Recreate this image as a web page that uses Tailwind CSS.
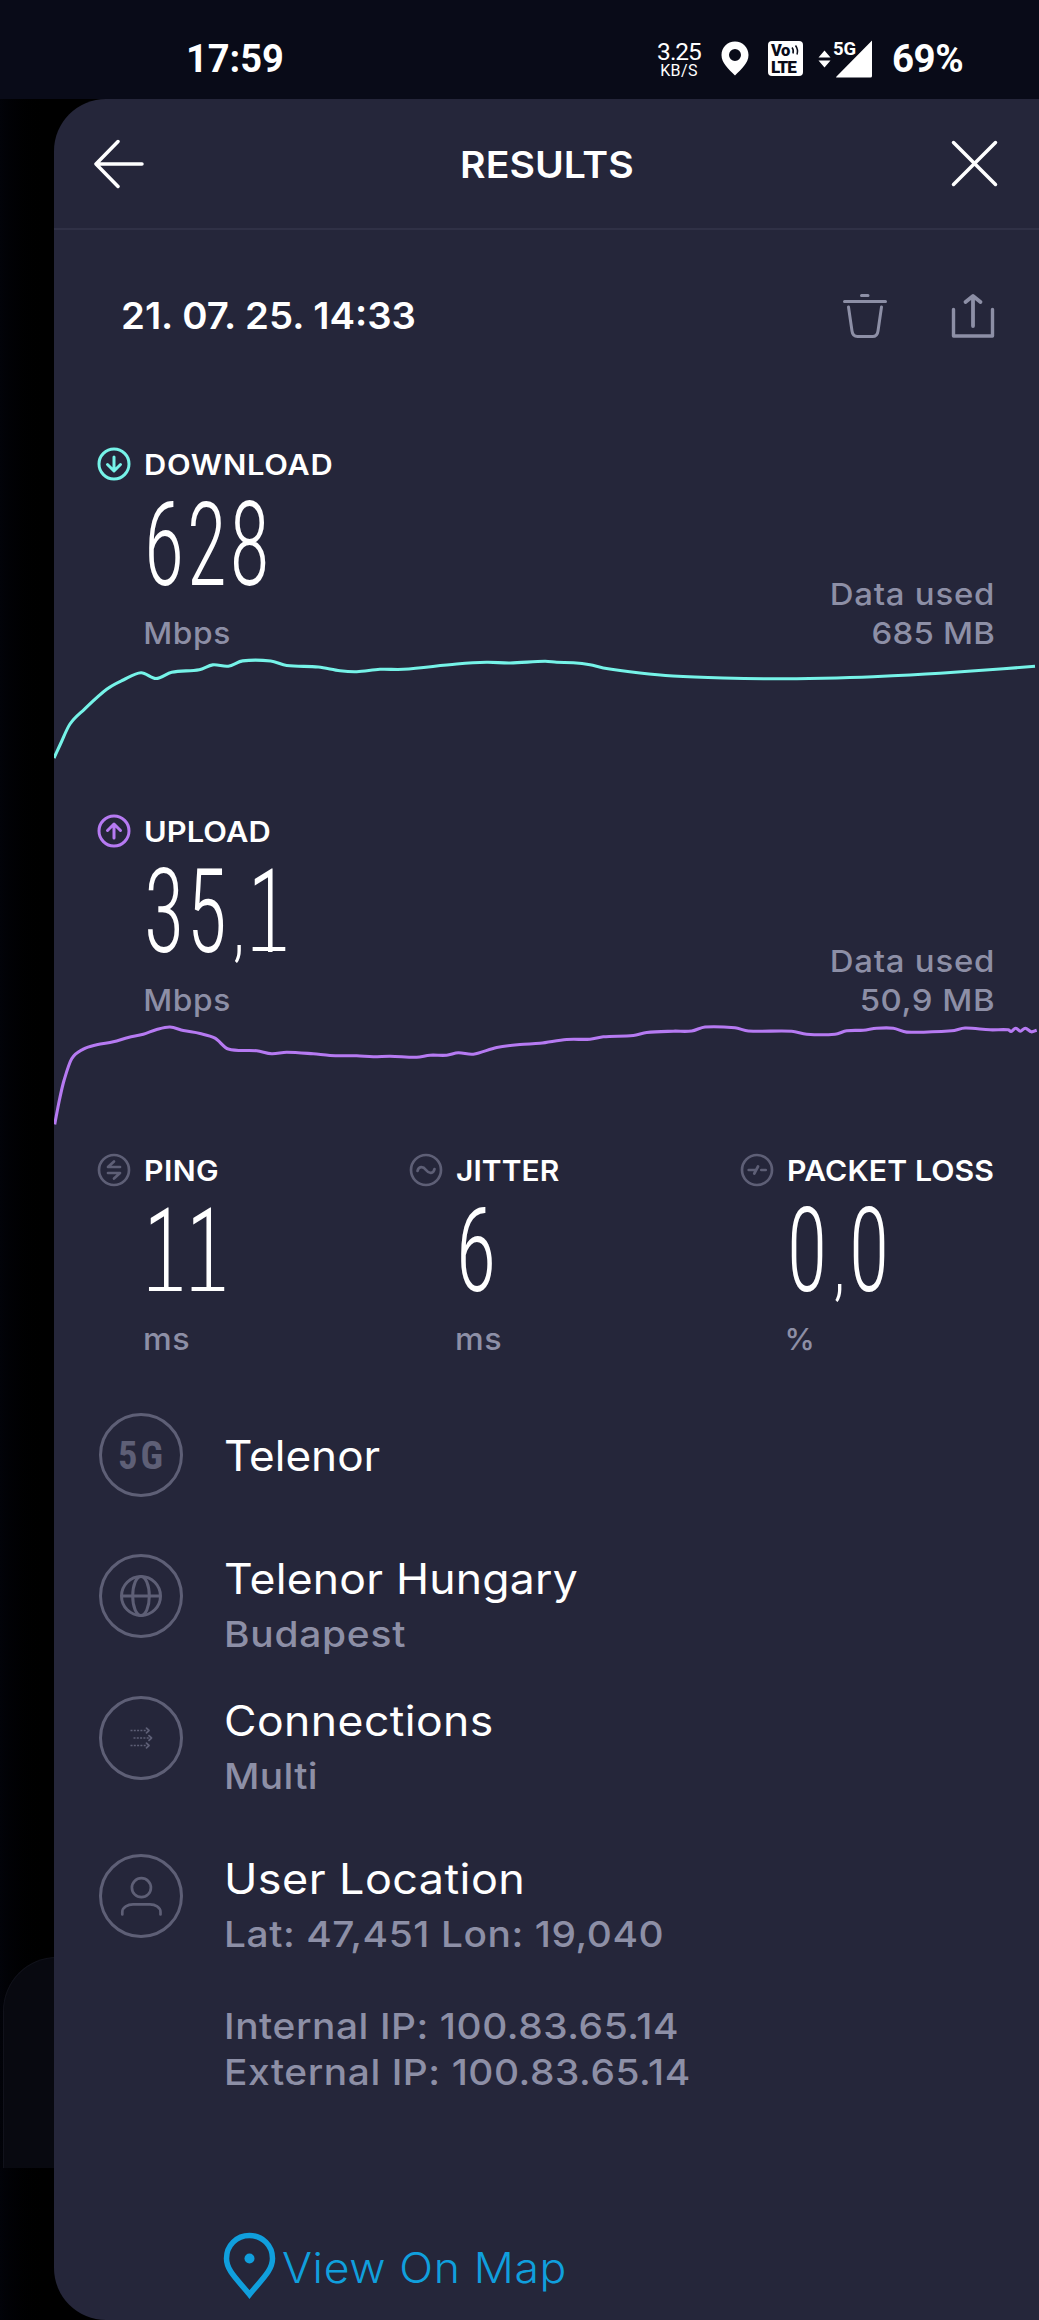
<!DOCTYPE html>
<html lang="en">
<head>
<meta charset="utf-8">
<title>Results</title>
<script src="https://cdn.jsdelivr.net/npm/@tailwindcss/browser@4"></script>
</head>
<body class="bg-[#020308]">
<div class="flex h-[2320px] w-[1039px] flex-col overflow-hidden font-['Inter',sans-serif] text-white">

  <!-- Status bar -->
  <div class="flex h-[99px] shrink-0 items-center bg-[#090b18] pt-[18px] pl-[186px] font-['Roboto',sans-serif]">
    <span class="w-[471px] text-[38px] leading-[40px] font-bold">17:59</span>
    <div class="flex w-[44px] flex-col items-center pt-[3px]">
      <span class="text-[24.5px] leading-[20px] tracking-[-1px]">3.25</span>
      <span class="mt-px text-[16px] leading-[16px] tracking-[0.4px]">KB/S</span>
    </div>
    <svg class="ml-[20px] h-[35px] w-[28px]" viewBox="0 0 28 35"><path fill="#fff" fill-rule="evenodd" d="M14 0.5C6.300 0.500 0.500 6.500 0.500 14C0.500 22 7.500 28 14 34.500C20.500 28 27.500 22 27.500 14C27.500 6.500 21.700 0.500 14 0.500ZM14 8A6 6 0 1 1 14 20A6 6 0 1 1 14 8Z"/></svg>
    <div class="relative ml-[19px] h-[35px] w-[35px] rounded-[4px] bg-white text-[#090b18]">
      <span class="absolute top-[2px] left-[3px] text-[16.5px] leading-[16px] font-black tracking-[-0.5px]">Vo</span>
      <span class="absolute top-[18px] left-[3px] text-[17px] leading-[16px] font-black tracking-[-1px]">LTE</span>
      <svg class="absolute top-[4px] left-[23px] h-[10px] w-[9px]" viewBox="0 0 9 10" fill="none" stroke="#090b18" stroke-width="1.500"><path d="M1 2.500Q3 5 2 8.500M4.500 0.500Q7.500 4.500 6 9.500"/></svg>
    </div>
    <svg class="ml-[15px] h-[18px] w-[13px]" viewBox="0 0 13 18"><path fill="#fff" d="M6.500 0.500L12.500 7.500H0.500ZM6.500 17.500L12.500 10.500H0.500Z"/></svg>
    <div class="relative ml-[2px] h-[38px] w-[39px]">
      <svg class="h-[38px] w-[39px]" viewBox="0 0 39 38"><path fill="#fff" d="M39 0.500V36Q39 37.500 37.500 37.500H3.500Q2.500 37.500 3.500 36.500Z"/></svg>
      <span class="absolute top-[-1px] left-0 text-[18.5px] leading-[20px] font-bold">5G</span>
    </div>
    <span class="ml-[20px] text-[38.5px] leading-[40px] font-bold tracking-[-0.5px]">69%</span>
  </div>

  <div class="flex flex-1">
    <!-- Dimmed screen behind the panel -->
    <div class="relative w-[54px] shrink-0 bg-linear-to-r from-[#020309] to-black">
      <div class="absolute top-[1858px] left-[3px] h-[211px] w-[110px] rounded-tl-[54px] border-t border-l border-[#11121b] bg-[#080910]"></div>
      <div class="absolute top-0 left-[54px] h-[2221px] w-[60px] bg-black"></div>
    </div>

    <!-- Results panel -->
    <main class="relative flex flex-1 flex-col rounded-l-[52px] bg-[#25263a]">
      <header class="flex h-[131px] shrink-0 items-center justify-between border-b-2 border-[#303146] pr-[41px] pl-[40px]">
        <svg class="h-[50px] w-[51px]" viewBox="0 0 51 50" fill="none" stroke="#fff" stroke-width="3.500" stroke-linecap="round" stroke-linejoin="round"><path d="M48 25H2.500M24 2.500L2 25L24 47.500"/></svg>
        <h1 class="mr-[2px] scale-x-[1.06] pt-[3px] text-[37px] leading-[44px] font-semibold">RESULTS</h1>
        <svg class="h-[47px] w-[47px]" viewBox="0 0 47 47" fill="none" stroke="#fff" stroke-width="3.500" stroke-linecap="round"><path d="M2.500 2.500L44.500 44.500M44.500 2.500L2.500 44.500"/></svg>
      </header>

      <div class="flex h-[172px] shrink-0 items-center justify-between pr-[44px] pl-[67px]">
        <span class="origin-left scale-x-[1.036] text-[37px] leading-[44px] font-semibold">21. 07. 25. 14:33</span>
        <div class="flex gap-[64px]">
          <svg class="h-[46px] w-[44px]" viewBox="0 0 44 46" fill="none" stroke="#8d8fa6" stroke-width="3" stroke-linecap="round" stroke-linejoin="round"><path d="M18.500 2.500H25M1.500 8.500H42.500M5.500 14L9 38Q9.700 43.500 14.500 43.500H29.500Q34.300 43.500 35 38L38.500 14"/></svg>
          <svg class="h-[46px] w-[44px]" viewBox="0 0 44 46" fill="none" stroke="#8d8fa6" stroke-linecap="round" stroke-linejoin="round"><path stroke-width="3.400" d="M2.500 16.500V43H41.500V16.500"/><path stroke-width="3.800" d="M22 33V3.500M14.500 9L22 3L29.500 9"/></svg>
        </div>
      </div>

      <!-- Download -->
      <section class="h-[366.5px] shrink-0 pt-[42px]">
        <div class="flex h-[208px] items-end justify-between pr-[44px] pl-[43px]">
          <div>
            <div class="flex h-[40px] items-center gap-[13px]">
              <svg class="h-[34px] w-[34px]" viewBox="0 0 34 34" fill="none" stroke="#76f3e8" stroke-width="3" stroke-linecap="round" stroke-linejoin="round"><circle cx="17" cy="17" r="15"/><path d="M17 10V23.500M10.500 17.500L17 24L23.500 17.500"/></svg>
              <span class="origin-left scale-x-[1.08] pt-[2px] text-[28.5px] leading-[34px] font-semibold tracking-[0.65px]">DOWNLOAD</span>
            </div>
            <div class="mt-[11px] h-[100px] pl-[47px]"><span class="inline-block origin-left scale-x-[.71] font-['Roboto_Condensed',sans-serif] text-[116px] leading-[100px] font-[260] tracking-[3.8px]">628</span></div>
            <div class="mt-[18px] origin-left scale-x-[1.04] pl-[44.500px] text-[30.5px] leading-[39px] font-medium tracking-[0.6px] text-[#8d8fa6]">Mbps</div>
          </div>
          <div class="flex origin-right scale-x-[1.08] flex-col items-end text-[30.5px] leading-[39px] font-medium text-[#8d8fa6]"><span class="tracking-[0.7px]">Data used</span><span class="tracking-[0.2px]">685 MB</span></div>
        </div>
        <svg class="block h-[116.5px] w-[985px]" viewBox="54 652 985 116.5" fill="none" stroke="#76f3e8" stroke-width="3.100" stroke-linejoin="round"><path data-points="54,758 60,745 70,724 84.3,709.3 106.7,689.3 123.3,680 141,672.7 156,678.5 171.7,672.3 199.3,669.7 212.7,664.9 228.3,666.2 242.7,660.9 270.7,661 286.7,665.5 318.3,667 340,670.7 356.7,671.7 380,669.3 403.3,669.3 456.7,664 486.7,662.3 510,663 545,661.2 556.7,662.3 573.3,662.7 590,664.7 603.3,668 640,673 673,676 723,678 773,678.8 823,678.2 873,676.7 940,673.3 1035,666.3"/></svg>
      </section>

      <!-- Upload -->
      <section class="h-[366.5px] shrink-0 pt-[42px]">
        <div class="flex h-[208px] items-end justify-between pr-[44px] pl-[43px]">
          <div>
            <div class="flex h-[40px] items-center gap-[13px]">
              <svg class="h-[34px] w-[34px]" viewBox="0 0 34 34" fill="none" stroke="#b67af2" stroke-width="3" stroke-linecap="round" stroke-linejoin="round"><circle cx="17" cy="17" r="15"/><path d="M17 24V10.500M10.500 16.500L17 10L23.500 16.500"/></svg>
              <span class="origin-left scale-x-[1.08] pt-[2px] text-[28.5px] leading-[34px] font-semibold tracking-[0.1px]">UPLOAD</span>
            </div>
            <div class="mt-[11px] h-[100px] pl-[47px]"><span class="inline-block origin-left scale-x-[.71] font-['Roboto_Condensed',sans-serif] text-[116px] leading-[100px] font-[260] tracking-[3.8px] whitespace-nowrap">35<span class="inline-block w-[26px] text-center text-[80px] tracking-normal">,</span><span class="relative inline-block w-[60px] tracking-normal after:absolute after:top-[85.500px] after:left-[7px] after:h-[4px] after:w-[46px] after:bg-white after:content-['']">1</span></span></div>
            <div class="mt-[18px] origin-left scale-x-[1.04] pl-[44.500px] text-[30.5px] leading-[39px] font-medium tracking-[0.6px] text-[#8d8fa6]">Mbps</div>
          </div>
          <div class="flex origin-right scale-x-[1.08] flex-col items-end text-[30.5px] leading-[39px] font-medium text-[#8d8fa6]"><span class="tracking-[0.7px]">Data used</span><span class="tracking-[0.5px]">50,9 MB</span></div>
        </div>
        <svg class="block h-[116.5px] w-[985px]" viewBox="54 1018.5 985 116.5" fill="none" stroke="#b67af2" stroke-width="3.100" stroke-linejoin="round"><path data-points="54.700,1124 59.3,1100 64,1080 71.7,1058.3 83.3,1048.7 96.7,1044.3 113.3,1041.3 128.3,1037 143.3,1033.7 156.7,1029 170,1026.5 183.3,1030 200,1033 215,1037.7 228.3,1048.5 256.7,1050.3 271.7,1053.3 286.7,1051.7 313.3,1053.3 330,1055 356.7,1055.3 373.3,1056.3 390,1055.7 416.7,1056.7 430,1054.7 446.7,1054.7 458.3,1052.3 473.3,1053.7 496.7,1047 520,1044 540,1042.8 566.7,1039 590,1038.7 603.3,1036.3 633.3,1035 646.7,1032 673.3,1030.7 691.7,1030.5 705,1026.5 735,1027.3 748.3,1030.5 791.7,1030.7 806.7,1033.7 835,1033.7 846.7,1030.3 863.3,1029.7 876.7,1027.7 893.3,1027.7 906.7,1031.6 951.7,1030.3 965,1027.5 990,1029.3 1008.3,1029.3 1011,1031 1015.7,1027.7 1020.3,1030.7 1025.3,1027.7 1031.3,1031.3 1036.7,1029.7"/></svg>
      </section>

      <!-- Ping, jitter, packet loss -->
      <section class="grid h-[277.7px] shrink-0 grid-cols-[312.400px_331px_auto] pt-[15px] pl-[43px]">
        <div>
          <div class="flex h-[40px] items-center gap-[13px]">
            <svg class="h-[34px] w-[34px]" viewBox="0 0 34 34" fill="none" stroke="#5e5f76" stroke-width="2.700" stroke-linecap="round" stroke-linejoin="round"><circle cx="17" cy="17" r="15"/><path d="M23 14H11L17 8.500M11 20H23L17 25.500"/></svg>
            <span class="origin-left scale-x-[1.06] pt-[2px] text-[28.5px] leading-[34px] font-semibold tracking-[0.4px]">PING</span>
          </div>
          <div class="mt-[11px] h-[100px] pl-[47px]"><span class="inline-block origin-left scale-x-[.71] font-['Roboto_Condensed',sans-serif] text-[116px] leading-[100px] font-[260] whitespace-nowrap"><span class="relative inline-block w-[60px] after:absolute after:top-[85.500px] after:left-[7px] after:h-[4px] after:w-[46px] after:bg-white after:content-['']">1</span><span class="relative inline-block w-[60px] after:absolute after:top-[85.500px] after:left-[7px] after:h-[4px] after:w-[46px] after:bg-white after:content-['']">1</span></span></div>
          <div class="mt-[18px] origin-left scale-x-[1.06] pl-[43.500px] text-[30.5px] leading-[39px] font-medium tracking-[0.3px] text-[#8d8fa6]">ms</div>
        </div>
        <div>
          <div class="flex h-[40px] items-center gap-[13px]">
            <svg class="h-[34px] w-[34px]" viewBox="0 0 34 34" fill="none" stroke="#5e5f76" stroke-width="2.700" stroke-linecap="round" stroke-linejoin="round"><circle cx="17" cy="17" r="15"/><path d="M8.500 18C9.500 13 14 13 17 17C20 21 24.500 21 25.500 16"/></svg>
            <span class="origin-left scale-x-[1.05] pt-[2px] text-[28.5px] leading-[34px] font-semibold tracking-[0.1px]">JITTER</span>
          </div>
          <div class="mt-[11px] h-[100px] pl-[47px]"><span class="inline-block origin-left scale-x-[.71] font-['Roboto_Condensed',sans-serif] text-[116px] leading-[100px] font-[260] tracking-[3.8px]">6</span></div>
          <div class="mt-[18px] origin-left scale-x-[1.06] pl-[43.500px] text-[30.5px] leading-[39px] font-medium tracking-[0.3px] text-[#8d8fa6]">ms</div>
        </div>
        <div>
          <div class="flex h-[40px] items-center gap-[13px]">
            <svg class="h-[34px] w-[34px] shrink-0" viewBox="0 0 34 34" fill="none" stroke="#5e5f76" stroke-width="2.700" stroke-linecap="round" stroke-linejoin="round"><circle cx="17" cy="17" r="15"/><path d="M8.700 17H15.500M14.300 20.500L18 13.500M21.300 17H25.700"/></svg>
            <span class="origin-left scale-x-[1.06] pt-[2px] text-[28.5px] leading-[34px] font-semibold tracking-[0.1px] whitespace-nowrap">PACKET LOSS</span>
          </div>
          <div class="mt-[11px] h-[100px] pl-[47px]"><span class="inline-block origin-left scale-x-[.71] font-['Roboto_Condensed',sans-serif] text-[116px] leading-[100px] font-[260] tracking-[3.8px] whitespace-nowrap">0<span class="inline-block w-[27px] text-center text-[80px] tracking-normal">,</span>0</span></div>
          <div class="mt-[18px] pl-[44px] text-[30.5px] leading-[39px] font-medium text-[#8d8fa6]">%</div>
        </div>
      </section>

      <!-- Connection details -->
      <section class="shrink-0 pl-[44.600px] text-[42px] leading-[52px] font-normal">
        <div class="flex h-[140px] gap-[42px]">
          <div class="mt-[0.800px] flex h-[84px] w-[84px] items-center justify-center rounded-full border-3 border-[#5e5f76] pt-px pl-[3px] font-['Roboto_Condensed',sans-serif] text-[38.5px] leading-[40px] font-bold tracking-[3px] text-[#5e5f76]">5G</div>
          <div class="-ml-px origin-left scale-x-[1.05] pt-[17px]">Telenor</div>
        </div>
        <div class="flex h-[142px] gap-[42px]">
          <div class="mt-[1.300px] flex h-[84px] w-[84px] items-center justify-center rounded-full border-3 border-[#5e5f76]">
            <svg class="h-[44px] w-[44px]" viewBox="0 0 44 44" fill="none" stroke="#5e5f76" stroke-width="3"><circle cx="22" cy="22" r="19.500"/><ellipse cx="22" cy="22" rx="8.300" ry="19.500"/><path d="M2.500 22H41.500"/></svg>
          </div>
          <div class="-ml-px">
            <div class="origin-left scale-x-[1.06] tracking-[0.2px]">Telenor Hungary</div>
            <div class="mt-[6px] origin-left scale-x-[1.08] text-[36px] leading-[46px] font-medium tracking-[0.7px] text-[#8d8fa6]">Budapest</div>
          </div>
        </div>
        <div class="flex h-[158px] gap-[42px]">
          <div class="mt-[1.300px] flex h-[84px] w-[84px] items-center justify-center rounded-full border-3 border-[#5e5f76]">
            <svg class="h-[22px] w-[24px]" viewBox="0 0 24 22" fill="none" stroke="#5e5f76" stroke-width="1.700"><path stroke-dasharray="2 1.300" d="M1.500 3.500H18M4.500 11H20.500M1.500 18.500H18"/><path stroke-linecap="round" stroke-linejoin="round" d="M17.500 1.200L20 3.500L17.500 5.800M20 8.700L22.500 11L20 13.300M17.500 16.200L20 18.500L17.500 20.800"/></svg>
          </div>
          <div class="-ml-px">
            <div class="origin-left scale-x-[1.06] tracking-[0.4px]">Connections</div>
            <div class="mt-[6px] origin-left scale-x-[1.08] text-[36px] leading-[46px] font-medium tracking-[0.3px] text-[#8d8fa6]">Multi</div>
          </div>
        </div>
        <div class="flex gap-[42px]">
          <div class="mt-[1.500px] flex h-[84px] w-[84px] items-center justify-center rounded-full border-3 border-[#5e5f76]">
            <svg class="h-[44px] w-[44px]" viewBox="0 0 44 44" fill="none" stroke="#5e5f76" stroke-width="2.700" stroke-linecap="round"><circle cx="22.400" cy="13.700" r="9.500"/><path d="M3.300 40.500V38C3.300 33 9 30.300 14 30.300H31C36 30.300 41.500 33 41.500 38V40.500"/></svg>
          </div>
          <div class="-ml-px">
            <div class="origin-left scale-x-[1.07] tracking-[0.4px]">User Location</div>
            <div class="mt-[6px] origin-left scale-x-[1.08] text-[36px] leading-[46px] font-medium tracking-[0.52px] text-[#8d8fa6]">
              <p>Lat: 47,451 Lon: 19,040</p>
              <p class="mt-[46px]">Internal IP: 100.83.65.14</p>
              <p>External IP: 100.83.65.14</p>
            </div>
          </div>
        </div>
      </section>

      <a class="mt-[137px] flex h-[68px] items-center gap-[6px] pl-[169px] text-[42px] leading-[52px] font-light text-[#109fdd]">
        <svg class="h-[67px] w-[53px]" viewBox="0 0 53 67"><path fill="none" stroke="#109fdd" stroke-width="5.500" d="M26.500 3.500C13.500 3.500 3.500 13.500 3.500 26.500C3.500 39 15 48 26.500 62.500C38 48 49.500 39 49.500 26.500C49.500 13.500 39.500 3.500 26.500 3.500Z"/><circle cx="26.500" cy="26.500" r="5" fill="#109fdd"/></svg>
        <span class="origin-left scale-x-[1.06] pt-[4px] tracking-[0.6px]">View On Map</span>
      </a>
    </main>
  </div>
</div>
<script>
// Turns each list of samples into a smooth curve (cubic Béziers through every point).
document.querySelectorAll('path[data-points]').forEach(function (path) {
  var p = path.dataset.points.split(' ').map(function (s) { return s.split(',').map(Number); });
  var d = 'M' + p[0];
  for (var i = 0; i < p.length - 1; i++) {
    var a = p[i - 1] || p[i], b = p[i], c = p[i + 1], e = p[i + 2] || c;
    var h = (c[0] - b[0]) / 3;
    var mb = c[0] === a[0] ? 0 : (c[1] - a[1]) / (c[0] - a[0]);
    var mc = e[0] === b[0] ? 0 : (e[1] - b[1]) / (e[0] - b[0]);
    d += 'C' + [b[0] + h, b[1] + mb * h, c[0] - h, c[1] - mc * h, c[0], c[1]].join(' ');
  }
  path.setAttribute('d', d);
});
</script>
</body>
</html>
